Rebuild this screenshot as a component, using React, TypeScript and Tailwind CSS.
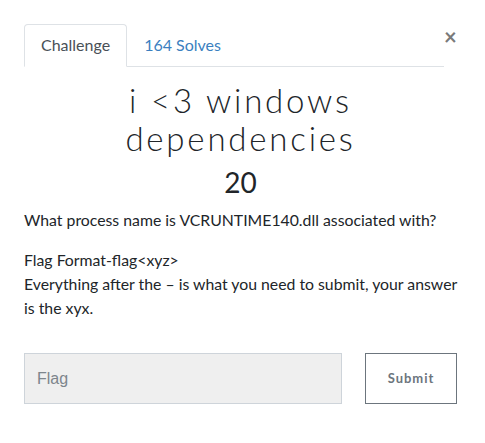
import React from "react";

/**
 * Challenge modal: tabs, title, value, description and flag form.
 */
export default function App() {
  return (
    <div
      className="min-h-screen bg-white pl-6 pr-7 pt-6 text-[#212529]"
      style={{ fontFamily: "Lato, 'Liberation Sans', sans-serif" }}
    >
      {/* Tabs + close */}
      <div className="flex items-start">
        <div className="flex flex-1 border-b border-[#dee2e6]">
          <div className="-mb-px rounded-t border border-[#dee2e6] border-b-white bg-white px-4 py-2 text-base leading-6 text-[#495057]">
            Challenge
          </div>
          <div className="border border-transparent px-4 py-2 text-base leading-6 text-[#3b7fc0]">
            164 Solves
          </div>
        </div>
        <button className="mt-px w-[13px] text-[22px] font-bold leading-6 text-[#7a7a7a]">
          ×
        </button>
      </div>

      {/* Title */}
      <h2 className="mt-[14px] text-center text-[33px] font-light leading-[38px] tracking-[2.8px] text-[#212529]">
        i &lt;3 windows
        <br />
        dependencies
      </h2>
      <h3 className="mt-[8px] text-center text-[28px] leading-[34px] text-[#212529]">
        20
      </h3>

      {/* Description */}
      <div className="mt-[9px] text-[15.8px] leading-6">
        <p>What process name is VCRUNTIME140.dll associated with?</p>
        <p className="mt-4">
          Flag Format-flag&lt;xyz&gt;
          <br />
          Everything after the – is what you need to submit, your answer is the xyx.
        </p>
      </div>

      {/* Flag form */}
      <div className="mt-[33px] flex items-start gap-[23px]">
        <input
          placeholder="Flag"
          className="h-[51px] flex-1 border border-[#ced4da] bg-[#efefef] px-3 text-base text-[#495057] outline-none placeholder:text-[#7d858c]"
          style={{ fontFamily: "'Liberation Sans', Arial, sans-serif" }}
        />
        <button className="h-[51px] w-[92px] border border-[#6c757d] bg-white text-[13px] font-bold tracking-[1px] text-[#6c757d]">
          Submit
        </button>
      </div>
    </div>
  );
}
